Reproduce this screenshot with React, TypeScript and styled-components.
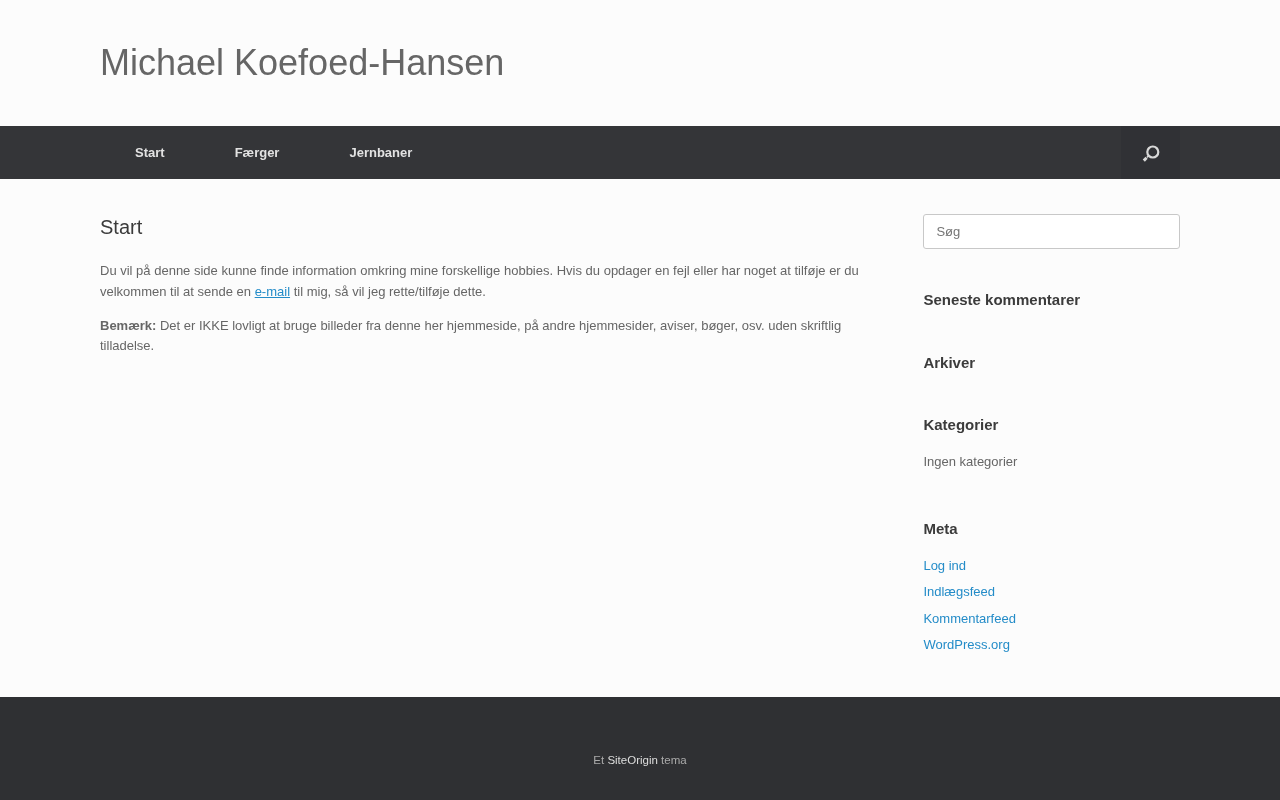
import React from "react";
import styled, { createGlobalStyle } from "styled-components";

const Global = createGlobalStyle`
  html, body { margin: 0; padding: 0; background: #fcfcfc; }
  body { font-family: "Liberation Sans", Arial, sans-serif; font-size: 13px; line-height: 20.8px; color: #666666; }
  * { box-sizing: border-box; }
`;

const Page = styled.div`
  min-height: 800px;
  display: flex;
  flex-direction: column;
  will-change: transform;
`;
const Masthead = styled.header`
  height: 126px;
  padding: 39px 100px 0;
`;
const SiteTitle = styled.div`
  font-size: 36px;
  line-height: 48px;
  color: #666666;
`;
const NavBar = styled.nav`
  height: 53px;
  background: #343538;
  padding: 0 100px;
  display: flex;
  justify-content: space-between;
`;
const Menu = styled.ul`
  list-style: none;
  margin: 0;
  padding: 0;
  display: flex;
`;
const MenuLink = styled.a`
  display: block;
  padding: 0 35px;
  font-size: 13px;
  font-weight: 700;
  line-height: 53px;
  color: #e2e2e2;
`;
const SearchButton = styled.div`
  width: 59px;
  background: #303135;
  display: flex;
  align-items: center;
  justify-content: center;
`;
const Content = styled.div`
  flex: 1;
  padding: 35px 100px 0;
  display: flex;
  justify-content: space-between;
`;
const Main = styled.main`
  width: 765px;
`;
const PageTitle = styled.h1`
  margin: 0 0 21px;
  font-size: 20px;
  font-weight: 400;
  line-height: 26px;
  color: #3b3b3b;
`;
const Para = styled.p`
  margin: 0 0 13px;
`;
const Strong = styled.strong`
  font-weight: 700;
`;
const InlineLink = styled.a`
  color: #248cc8;
  text-decoration: underline;
`;
const Sidebar = styled.aside`
  width: 256.6px;
`;
const SearchInput = styled.input`
  display: block;
  width: 100%;
  height: 35px;
  padding: 0 12px;
  border: 1px solid #c8c8c8;
  border-radius: 3px;
  background: #ffffff;
  font: 13px "Liberation Sans", Arial, sans-serif;
  color: #666666;
  &::placeholder { color: #757575; opacity: 1; }
`;
const Widget = styled.section<{ $top: number }>`
  margin-top: ${(p) => p.$top}px;
`;
const WidgetTitle = styled.h3`
  margin: 0;
  font-size: 15px;
  font-weight: 700;
  line-height: 20px;
  color: #3b3b3b;
`;
const WidgetText = styled.div`
  margin-top: 16.5px;
`;
const MetaList = styled.ul`
  list-style: none;
  margin: 16.5px 0 0;
  padding: 0;
  display: flex;
  flex-direction: column;
  gap: 5.6px;
`;
const MetaLink = styled.a`
  color: #248cc8;
`;
const Footer = styled.footer`
  height: 103px;
  background: #2f3033;
  padding-top: 53px;
  text-align: center;
  font-size: 11.5px;
  line-height: 20px;
  color: #aaaaaa;
`;
const FooterLink = styled.a`
  color: #dddddd;
`;

export default function App() {
  return (
    <Page>
      <Global />
      <Masthead>
        <SiteTitle>Michael Koefoed-Hansen</SiteTitle>
      </Masthead>
      <NavBar>
        <Menu>
          <li><MenuLink>Start</MenuLink></li>
          <li><MenuLink>Færger</MenuLink></li>
          <li><MenuLink>Jernbaner</MenuLink></li>
        </Menu>
        <SearchButton>
          <svg width="18" height="18" viewBox="0 0 18 18" fill="none">
            <circle cx="10.8" cy="8" r="5.5" stroke="#d8d8d8" strokeWidth="2.2" />
            <path d="M6.6 11.8 L5 13.4" stroke="#d8d8d8" strokeWidth="1.6" />
            <path d="M4.6 13.8 L1.8 16.6" stroke="#d8d8d8" strokeWidth="3" />
          </svg>
        </SearchButton>
      </NavBar>
      <Content>
        <Main>
          <PageTitle>Start</PageTitle>
          <Para>
            Du vil på denne side kunne finde information omkring mine forskellige hobbies. Hvis du opdager en fejl eller har noget at tilføje er du velkommen til at sende en <InlineLink>e-mail</InlineLink> til mig, så vil jeg rette/tilføje dette.
          </Para>
          <Para>
            <Strong>Bemærk:</Strong> Det er IKKE lovligt at bruge billeder fra denne her hjemmeside, på andre hjemmesider, aviser, bøger, osv. uden skriftlig tilladelse.
          </Para>
        </Main>
        <Sidebar>
          <SearchInput placeholder="Søg" />
          <Widget $top={41}><WidgetTitle>Seneste kommentarer</WidgetTitle></Widget>
          <Widget $top={43}><WidgetTitle>Arkiver</WidgetTitle></Widget>
          <Widget $top={42}>
            <WidgetTitle>Kategorier</WidgetTitle>
            <WidgetText>Ingen kategorier</WidgetText>
          </Widget>
          <Widget $top={47}>
            <WidgetTitle>Meta</WidgetTitle>
            <MetaList>
              <li><MetaLink>Log ind</MetaLink></li>
              <li><MetaLink>Indlægsfeed</MetaLink></li>
              <li><MetaLink>Kommentarfeed</MetaLink></li>
              <li><MetaLink>WordPress.org</MetaLink></li>
            </MetaList>
          </Widget>
        </Sidebar>
      </Content>
      <Footer>
        Et <FooterLink>SiteOrigin</FooterLink> tema
      </Footer>
    </Page>
  );
}
